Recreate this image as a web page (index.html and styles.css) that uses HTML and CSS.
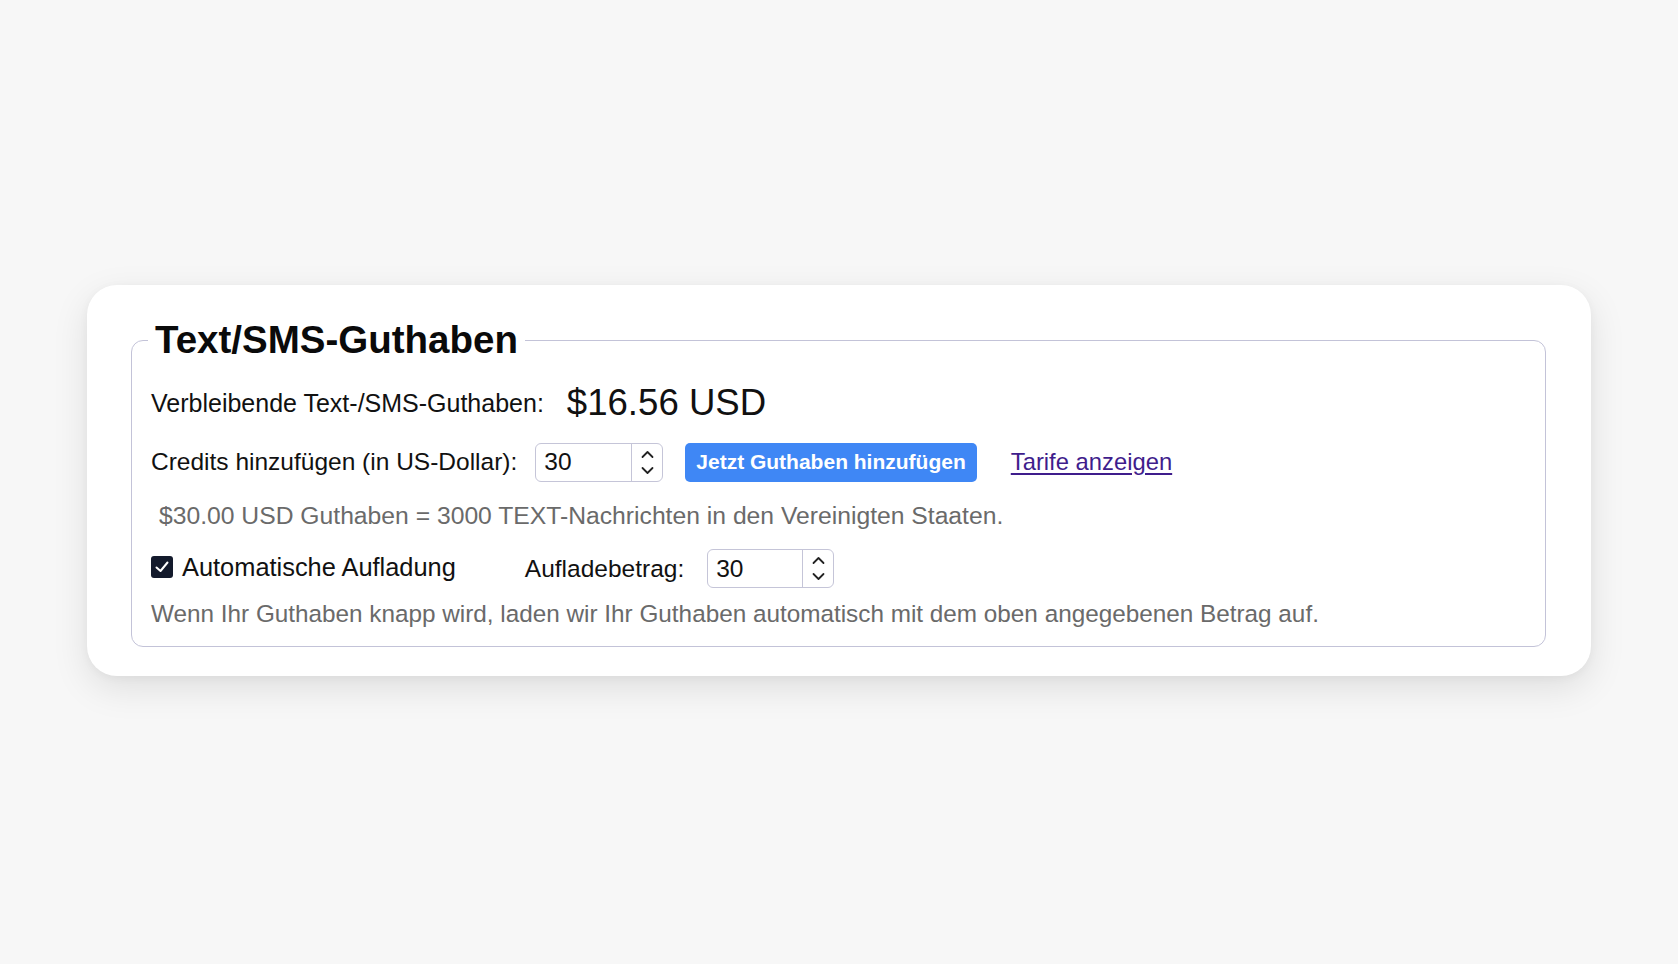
FILE: index.html
```html
<!DOCTYPE html>
<html lang="de">
<head>
<meta charset="utf-8">
<title>Text/SMS-Guthaben</title>
<link rel="stylesheet" href="styles.css">
</head>
<body>
<div class="card">
  <fieldset class="group">
    <legend class="title">Text/SMS-Guthaben</legend>
    <div class="row row-balance">
      <span class="label label-balance">Verbleibende Text-/SMS-Guthaben:</span>
      <span class="amount">$16.56 USD</span>
    </div>
    <div class="row row-add">
      <span class="label">Credits hinzufügen (in US-Dollar):</span>
      <div class="numbox">
        <input class="num" type="text" value="30">
        <span class="spin">
          <svg width="13" height="9" viewBox="0 0 13 9"><path d="M1.5 7 L6.5 2 L11.5 7" fill="none" stroke="#222" stroke-width="1.8" stroke-linecap="round" stroke-linejoin="round"/></svg>
          <svg width="13" height="9" viewBox="0 0 13 9"><path d="M1.5 2 L6.5 7 L11.5 2" fill="none" stroke="#222" stroke-width="1.8" stroke-linecap="round" stroke-linejoin="round"/></svg>
        </span>
      </div>
      <button class="btn" type="button">Jetzt Guthaben hinzufügen</button>
      <a class="link" href="#">Tarife anzeigen</a>
    </div>
    <div class="row row-note">
      <span class="note">$30.00 USD Guthaben = 3000 TEXT-Nachrichten in den Vereinigten Staaten.</span>
    </div>
    <div class="row row-auto">
      <label class="check">
        <span class="box">
          <svg width="16" height="14" viewBox="0 0 16 14"><path d="M2.5 7.5 L6.5 11 L13.5 2.5" fill="none" stroke="#fff" stroke-width="2" stroke-linecap="round" stroke-linejoin="round"/></svg>
        </span>
        <span class="label label-auto">Automatische Aufladung</span>
      </label>
      <span class="label label-reload">Aufladebetrag:</span>
      <div class="numbox numbox-small">
        <input class="num" type="text" value="30">
        <span class="spin">
          <svg width="13" height="9" viewBox="0 0 13 9"><path d="M1.5 7 L6.5 2 L11.5 7" fill="none" stroke="#222" stroke-width="1.8" stroke-linecap="round" stroke-linejoin="round"/></svg>
          <svg width="13" height="9" viewBox="0 0 13 9"><path d="M1.5 2 L6.5 7 L11.5 2" fill="none" stroke="#222" stroke-width="1.8" stroke-linecap="round" stroke-linejoin="round"/></svg>
        </span>
      </div>
    </div>
    <div class="row row-info">
      <span class="note note-info">Wenn Ihr Guthaben knapp wird, laden wir Ihr Guthaben automatisch mit dem oben angegebenen Betrag auf.</span>
    </div>
  </fieldset>
</div>
</body>
</html>
```

FILE: styles.css
```css
html, body {
  margin: 0;
  padding: 0;
}

body {
  background: #f7f7f7;
  font-family: "Liberation Sans", Arial, Helvetica, sans-serif;
  color: #111;
  padding-top: 285px;
  padding-left: 87px;
  min-height: 964px;
  box-sizing: border-box;
}

.card {
  width: 1504px;
  box-sizing: border-box;
  background: #fff;
  border-radius: 30px;
  padding: 33px 45px 29px 44px;
  box-shadow: 0 12px 36px rgba(0, 0, 0, 0.10), 0 2px 10px rgba(0, 0, 0, 0.04);
}

.group {
  margin: 0;
  border: 1.5px solid #c3c3d8;
  border-radius: 12px;
  padding: 19px 20px 17px 19px;
  min-width: 0;
}

.title {
  font-size: 38.5px;
  font-weight: 700;
  line-height: 44px;
  padding: 0 7px;
  margin-left: -3px;
  color: #0a0a0a;
}

.row {
  display: flex;
  align-items: center;
}

.label {
  font-size: 24.5px;
  color: #111;
}

.label-balance {
  font-size: 25px;
}

.row-balance {
  height: 44px;
}

.amount {
  font-size: 36.6px;
  margin-left: 23px;
  color: #111;
}

.row-add {
  height: 40px;
  margin-top: 17px;
}

.numbox {
  display: flex;
  height: 39px;
  width: 128px;
  box-sizing: border-box;
  border: 1.5px solid #c5c5d8;
  border-radius: 6px;
  margin-left: 18px;
  background: #fff;
  overflow: hidden;
}

.num {
  flex: 1;
  min-width: 0;
  border: none;
  outline: none;
  padding: 0 0 0 8px;
  font-family: "Liberation Sans", Arial, sans-serif;
  font-size: 24.5px;
  color: #111;
  background: transparent;
}

.spin {
  width: 30px;
  border-left: 1.5px solid #c5c5d8;
  display: flex;
  flex-direction: column;
  align-items: center;
  justify-content: center;
  gap: 7px;
}

.btn {
  margin-left: 22px;
  height: 39px;
  padding: 0 11px;
  border: none;
  border-radius: 5px;
  background: #3f87f5;
  color: #fff;
  font-family: "Liberation Sans", Arial, sans-serif;
  font-weight: 700;
  font-size: 21px;
}

.link {
  margin-left: 34px;
  font-size: 23.8px;
  color: #3f1d8c;
  text-decoration: underline;
  text-underline-offset: 3px;
}

.row-note {
  height: 30px;
  margin-top: 19px;
  padding-left: 8px;
}

.note {
  font-size: 24.7px;
  color: #6a6a6a;
}

.note-info {
  font-size: 24.3px;
}

.row-auto {
  height: 39px;
  margin-top: 18px;
}

.check {
  display: flex;
  align-items: center;
}

.box {
  width: 22px;
  height: 22px;
  border-radius: 3px;
  background: #131a2c;
  display: flex;
  align-items: center;
  justify-content: center;
  margin-right: 9px;
  position: relative;
  top: -2px;
}

.label-auto {
  font-size: 25.4px;
  position: relative;
  top: -1px;
}

.label-reload {
  margin-left: 69px;
}

.numbox-small {
  width: 127px;
  margin-left: 23px;
}

.row-info {
  height: 30px;
  margin-top: 11px;
}
```
